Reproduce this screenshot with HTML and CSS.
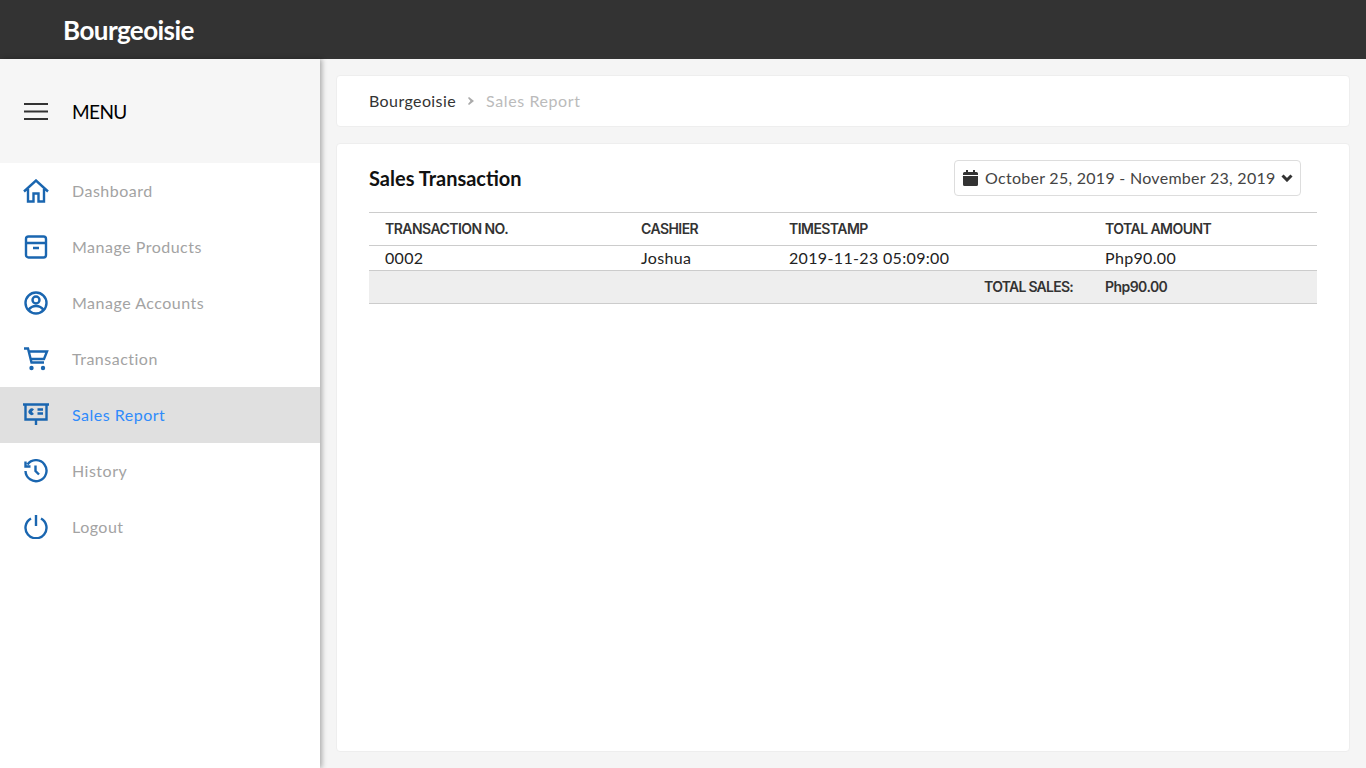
FILE: index.html
```html
<!DOCTYPE html>
<html lang="en">
<head>
    <meta charset="UTF-8">
    <meta name="viewport" content="width=device-width, initial-scale=1.0">
    <title>Bourgeoisie - Sales Report</title>
    <link rel="stylesheet" href="styles.css">
</head>
<body>
    <header class="topbar">
        <span class="brand">Bourgeoisie</span>
    </header>

    <div class="layout">
        <aside class="sidebar">
            <div class="menu-head">
                <svg class="menu-icon" viewBox="0 0 24 17" fill="none" stroke="#333" stroke-width="2"><path d="M0 1h24M0 8.500h24M0 16h24"/></svg>
                <span class="menu-title">MENU</span>
            </div>
            <nav class="nav">
                <a class="nav-item">
                    <svg class="nav-icon" viewBox="0 0 26 24"><path d="M1 12.500 13 1.500l12 11M5 10v12.500h5.500v-8h5v8H21V10"/></svg>
                    <span class="nav-label">Dashboard</span>
                </a>
                <a class="nav-item">
                    <svg class="nav-icon" viewBox="0 0 24 24"><rect x="2" y="1.500" width="20" height="21" rx="2.500"/><path d="M2 8h20M9 13h6"/></svg>
                    <span class="nav-label">Manage Products</span>
                </a>
                <a class="nav-item">
                    <svg class="nav-icon" viewBox="0 0 24 24"><circle cx="12" cy="12" r="10.500"/><circle cx="12" cy="9" r="3.500"/><path d="M4.500 19c2-3 4.500-4 7.500-4s5.500 1 7.500 4"/></svg>
                    <span class="nav-label">Manage Accounts</span>
                </a>
                <a class="nav-item">
                    <svg class="nav-icon" viewBox="0 0 24 24"><path d="M0 1.500h4l3.500 14H20M5 4.500h18l-3 7.500H7"/><circle class="dot" cx="7.500" cy="21" r="2.200"/><circle class="dot" cx="19" cy="21" r="2.200"/></svg>
                    <span class="nav-label">Transaction</span>
                </a>
                <a class="nav-item active">
                    <svg class="nav-icon" viewBox="0 0 26 24"><path d="M0 1.500h26M2.500 1.500v15h21v-15M13 16.500V22"/><path class="fill" d="M11 6.500a3.200 3.200 0 1 0 0 4.500L8.800 8.800z"/><path d="M14.500 6.500H20M14.500 10.500H20"/></svg>
                    <span class="nav-label">Sales Report</span>
                </a>
                <a class="nav-item">
                    <svg class="nav-icon" viewBox="0 0 24 24"><path d="M3.500 5.500A10.500 10.500 0 1 1 1.500 12M1.500 2.500v5h5M11.500 6.500V12l3.500 3.500"/></svg>
                    <span class="nav-label">History</span>
                </a>
                <a class="nav-item">
                    <svg class="nav-icon" viewBox="0 0 24 24"><path d="M7 3.500a10.500 10.500 0 1 0 10 0M12 0v11"/></svg>
                    <span class="nav-label">Logout</span>
                </a>
            </nav>
        </aside>

        <main class="content">
            <div class="card crumbs">
                <span class="crumb">Bourgeoisie</span>
                <svg class="crumb-sep" viewBox="0 0 6 8"><path d="M1 0l5 4-5 4-1-1 2.500-3L0 1z"/></svg>
                <span class="crumb current">Sales Report</span>
            </div>

            <section class="card report">
                <div class="report-head">
                    <h2 class="report-title">Sales Transaction</h2>
                    <button class="date-btn">
                        <svg class="cal-icon" viewBox="0 0 15 16"><path d="M3 0h2v2h5V0h2v2h1.500A1.500 1.500 0 0 1 15 3.500V5H0V3.500A1.500 1.500 0 0 1 1.500 2H3zM0 6h15v8.500a1.500 1.500 0 0 1-1.500 1.500h-12A1.500 1.500 0 0 1 0 14.500z"/></svg>
                        <span class="date-text">October 25, 2019 - November 23, 2019</span>
                        <svg class="caret" viewBox="0 0 12 8"><path d="M1.500 1.500 6 6l4.500-4.500"/></svg>
                    </button>
                </div>

                <table class="sales-table">
                    <colgroup>
                        <col class="col-no">
                        <col class="col-cashier">
                        <col class="col-time">
                        <col>
                    </colgroup>
                    <thead>
                        <tr>
                            <th>TRANSACTION NO.</th>
                            <th>CASHIER</th>
                            <th>TIMESTAMP</th>
                            <th>TOTAL AMOUNT</th>
                        </tr>
                    </thead>
                    <tbody>
                        <tr>
                            <td>0002</td>
                            <td>Joshua</td>
                            <td>2019-11-23 05:09:00</td>
                            <td>Php90.00</td>
                        </tr>
                    </tbody>
                    <tfoot>
                        <tr>
                            <th colspan="3" class="total-label">TOTAL SALES:</th>
                            <th>Php90.00</th>
                        </tr>
                    </tfoot>
                </table>
            </section>
        </main>
    </div>
</body>
</html>
```

FILE: styles.css
```css
* {
    box-sizing: border-box;
}

html, body {
    height: 100%;
}

body {
    margin: 0;
    overflow: hidden;
    display: flex;
    flex-direction: column;
    font-family: Lato, "Noto Sans", sans-serif;
    background-color: #f5f5f5;
    color: #333;
}

.topbar {
    height: 59px;
    flex-shrink: 0;
    display: flex;
    align-items: center;
    padding-left: 63px;
    background-color: #333;
}

.brand {
    font-size: 26px;
    font-weight: 700;
    letter-spacing: -0.55px;
    color: #fff;
}

.layout {
    flex: 1;
    display: flex;
    min-height: 0;
}

.sidebar {
    width: 320px;
    flex-shrink: 0;
    background-color: #fff;
    box-shadow: 2px 0 5px rgba(0, 0, 0, 0.3);
}

.menu-head {
    height: 104px;
    display: flex;
    align-items: center;
    padding-left: 24px;
    background-color: #f6f6f6;
}

.menu-icon {
    width: 24px;
    height: 17px;
    margin-right: 24px;
}

.menu-title {
    font-size: 19px;
    letter-spacing: -0.6px;
    color: #000;
}

.nav-item {
    height: 56px;
    display: flex;
    align-items: center;
    padding-left: 23px;
    font-size: 16px;
    letter-spacing: 0.5px;
    color: #a3a3a3;
}

.nav-item.active {
    background-color: #e0e0e0;
    color: #2f8bfb;
}

.nav-label {
    margin-bottom: 2px;
}

.nav-icon {
    width: 26px;
    height: 24px;
    margin-right: 23px;
    fill: none;
    stroke: #1a66b0;
    stroke-width: 2.400;
}

.nav-icon .dot, .nav-icon .fill {
    fill: #1a66b0;
    stroke: none;
}

.content {
    flex: 1;
    padding: 16px;
    display: flex;
    flex-direction: column;
    gap: 16px;
    min-width: 0;
}

.card {
    background-color: #fff;
    border: 1px solid #eee;
    border-radius: 4px;
}

.crumbs {
    height: 52px;
    display: flex;
    align-items: center;
    padding: 0 0 2px 32px;
    font-size: 16px;
    letter-spacing: 0.4px;
}

.crumb-sep {
    width: 6px;
    height: 8px;
    margin: 2px 12px 0;
    fill: #aaa;
}

.crumb.current {
    color: #bbb;
    letter-spacing: 0.6px;
}

.report {
    flex: 1;
    padding: 16px 32px;
}

.report-head {
    display: flex;
    align-items: center;
    justify-content: space-between;
    height: 36px;
    padding-right: 16px;
    margin-bottom: 16px;
}

.report-title {
    margin: 0;
    font-size: 20px;
    font-weight: 700;
    letter-spacing: 0;
    color: #111;
}

.date-btn {
    width: 347px;
    height: 36px;
    display: flex;
    align-items: center;
    padding: 0 7px 0 8px;
    background-color: #fff;
    border: 1px solid #ddd;
    border-radius: 4px;
    font-family: inherit;
    font-size: 16px;
    letter-spacing: 0.28px;
    color: #444;
}

.date-text {
    white-space: nowrap;
    margin-bottom: 2px;
}

.cal-icon {
    width: 15px;
    height: 16px;
    flex-shrink: 0;
    margin-right: 7px;
    fill: #333;
}

.caret {
    width: 12px;
    height: 8px;
    flex-shrink: 0;
    margin-left: auto;
    fill: none;
    stroke: #333;
    stroke-width: 3;
}

.sales-table {
    width: 100%;
    table-layout: fixed;
    border-collapse: collapse;
    font-size: 16px;
    letter-spacing: 0.34px;
}

.col-no {
    width: 256px;
}

.col-cashier {
    width: 148px;
}

.col-time {
    width: 316px;
}

.sales-table th, .sales-table td {
    padding: 0 16px;
    text-align: left;
}

.sales-table th {
    font-family: Inter, sans-serif;
    font-size: 14px;
    font-weight: 600;
    letter-spacing: -0.55px;
    padding-bottom: 1px;
}

.sales-table thead th {
    height: 33px;
    border-top: 1px solid #ccc;
    border-bottom: 1px solid #ccc;
}

.sales-table td {
    height: 25px;
    padding-bottom: 2px;
    color: #222;
}

.sales-table tfoot th {
    height: 33px;
    background-color: #eee;
    border-top: 1px solid #ccc;
    border-bottom: 1px solid #ccc;
}

.sales-table .total-label {
    text-align: right;
    letter-spacing: -0.75px;
}
```
